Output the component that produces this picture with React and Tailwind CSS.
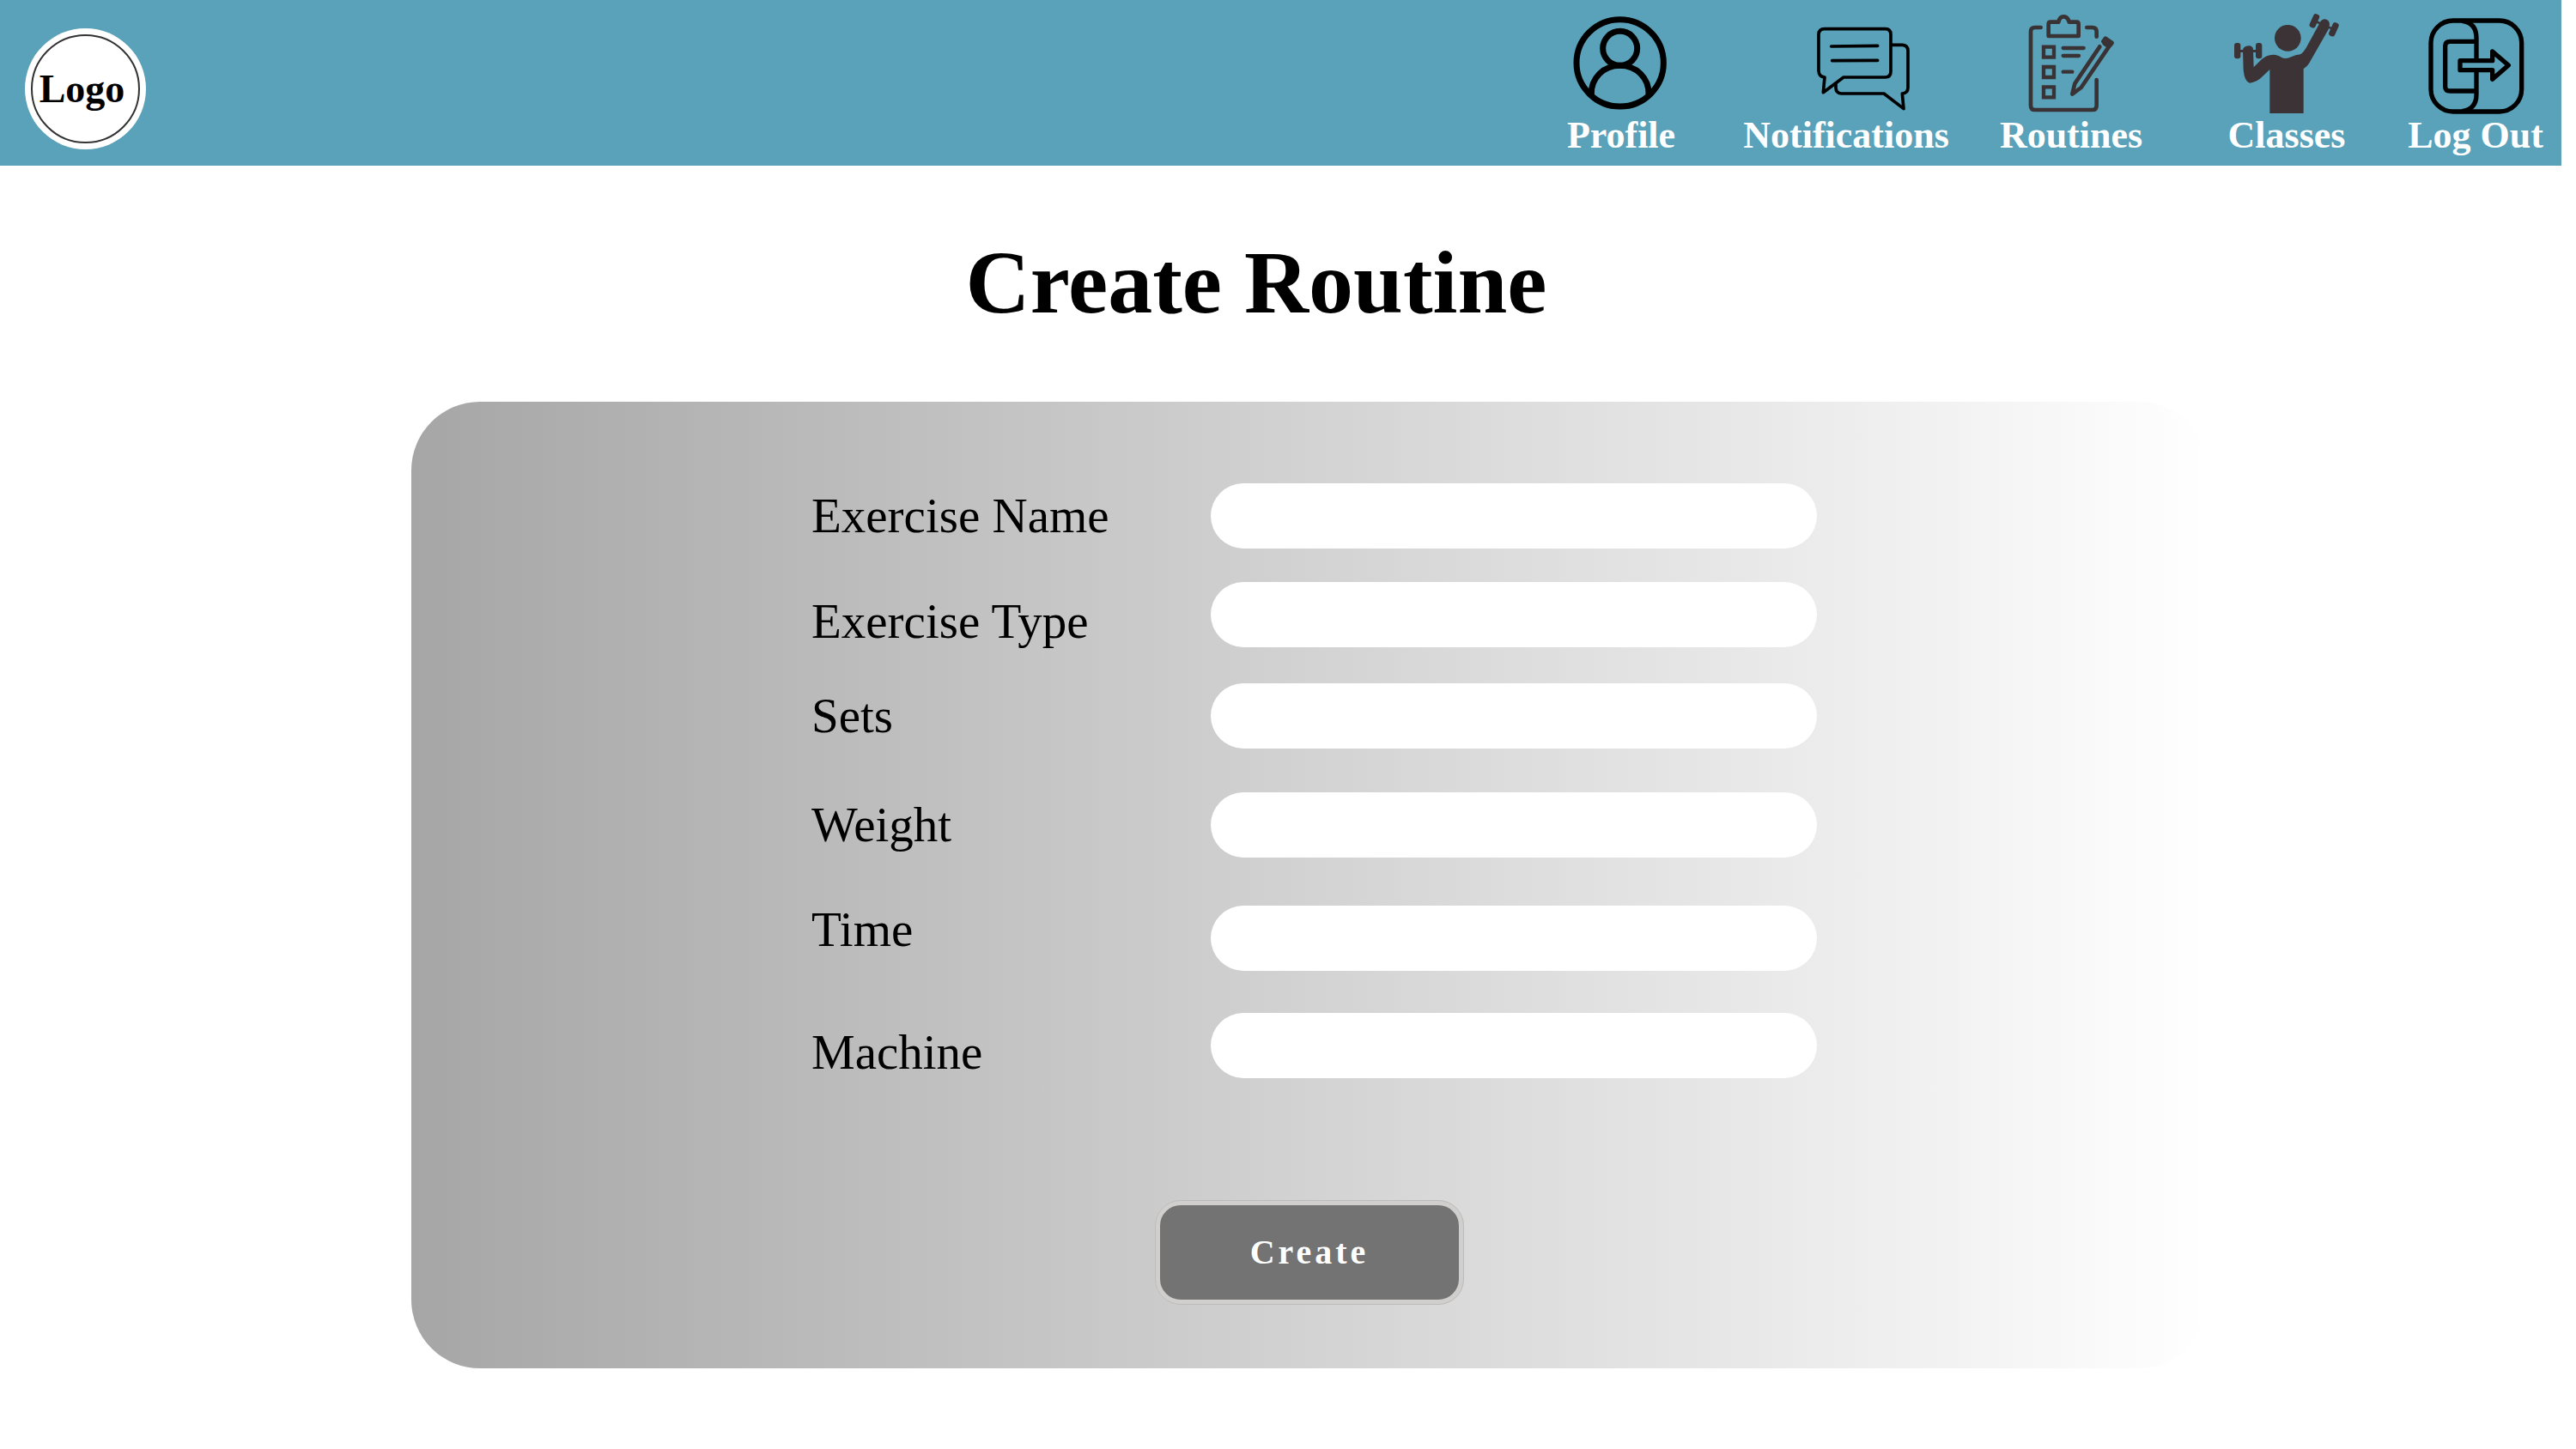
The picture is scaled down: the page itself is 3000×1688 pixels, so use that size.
import React from "react";

function ProfileIcon() {
  return (
    <svg aria-hidden="true" className="h-[134px] w-[160px]" viewBox="24 0 480 402" fill="none" stroke="#000" strokeWidth="21">
      <circle cx="260" cy="220" r="152" />
      <circle cx="260" cy="169" r="60" />
      <path d="M160 330C158 274 202 229 260 229S362 274 360 330" />
    </svg>
  );
}

function NotificationsIcon() {
  return (
    <svg aria-hidden="true" className="h-[134px] w-[160px]" viewBox="810 0 480 402" fill="none" stroke="#000" strokeWidth="11" strokeLinecap="round" strokeLinejoin="round">
      <path d="M975 101H1187Q1206 101 1206 121V250Q1206 270 1187 270H1041L970 323L975 270Q954 268 954 246V121Q954 101 975 101Z" />
      <path d="M1209 157H1247Q1266 158 1266 178V306Q1266 325 1246 327L1251 380L1182 327H1033Q1014 325 1014 306V293" />
      <path d="M998 162L1160 160M1001 212L1160 211" />
    </svg>
  );
}

function RoutinesIcon() {
  return (
    <svg aria-hidden="true" className="h-[134px] w-[160px]" viewBox="96 0 480 402" fill="none" stroke="#3a3335" strokeWidth="14" strokeLinecap="round" strokeLinejoin="round">
      <path d="M230 96H210Q195 96 195 111V368Q195 384 210 384H410Q425 384 425 368V279M391 96H410Q425 96 425 111V128" />
      <path d="M257 126V84Q257 77 264 77H292Q296 58 310 58T329 77H356Q362 77 362 84V126Z" />
      <g strokeWidth="13" strokeLinejoin="miter">
        <path d="M240 164H276V200H240ZM240 234H276V270H240ZM240 304H276V340H240Z" />
        <path d="M308 168H380M308 195H363M308 251H340" />
      </g>
      <path d="M436 163L349 292L340 329L371 306L468 163L452 152" />
      <path d="M456 134L479 150L471 160L448 145Z" />
    </svg>
  );
}

function ClassesIcon() {
  return (
    <svg aria-hidden="true" className="h-[134px] w-[160px]" viewBox="69 0 480 402" fill="#3b3335">
      <circle cx="313" cy="133" r="46" />
      <path d="M250 396V243L228 264Q205 288 180 290Q162 285 158 245L156 175Q157 161 177 160Q191 161 192 172L194 235L222 207Q238 192 262 191Q280 192 290 200Q306 209 325 199Q340 192 357 190Q368 184 380 162L423 83Q430 67 443 67Q459 70 459 86L455 103L387 222Q380 233 368 241V396Z" />
      <rect x="126" y="150" width="22" height="55" rx="9" />
      <rect x="201" y="150" width="22" height="55" rx="9" />
      <rect x="146" y="174" width="57" height="9" />
      <g transform="rotate(24 440 88)">
        <rect x="392" y="63" width="22" height="50" rx="9" />
        <rect x="466" y="63" width="22" height="50" rx="9" />
        <rect x="412" y="84" width="56" height="8" />
      </g>
    </svg>
  );
}

function LogOutIcon() {
  return (
    <svg aria-hidden="true" className="h-[134px] w-[160px]" viewBox="729 0 480 402" fill="none" stroke="#000" strokeWidth="16" strokeLinejoin="round">
      <rect x="813" y="72" width="317" height="318" rx="78" />
      <path d="M922 73Q972 80 972 132V212M972 245V330Q972 382 922 389" />
      <path d="M972 145H880Q863 145 863 161V302Q863 318 880 318H972" />
      <path d="M915 212H1028V180L1084 228L1028 277V245H915Z" />
    </svg>
  );
}

const navItems = [
  { label: "Profile", Icon: ProfileIcon },
  { label: "Notifications", Icon: NotificationsIcon },
  { label: "Routines", Icon: RoutinesIcon },
  { label: "Classes", Icon: ClassesIcon },
  { label: "Log Out", Icon: LogOutIcon },
];

const fields = [
  { id: "exercise-name", label: "Exercise Name", row: "items-start" },
  { id: "exercise-type", label: "Exercise Type", row: "mt-[39px] h-[84px]", labelSide: "self-end" },
  { id: "sets", label: "Sets", row: "mt-[34px] items-start" },
  { id: "weight", label: "Weight", row: "mt-[51px] items-start" },
  { id: "time", label: "Time", row: "mt-[46px] h-[86px]", inputSide: "self-end" },
  { id: "machine", label: "Machine", row: "mt-[49px] h-[84px]", labelSide: "self-end" },
];

export default function App() {
  return (
    <div className="min-h-screen bg-white pb-[94px] font-['Liberation_Serif',serif] text-black">
      <header className="mr-[17px] flex items-start justify-between bg-[#59a2ba] pb-[11px]">
        <a href="#home" className="mt-[33px] ml-[29px] flex size-[141px] items-center justify-center rounded-full bg-white">
          <span className="flex size-[127px] items-center justify-center rounded-full border-2 border-[#333] pr-2 text-[46px] leading-[48px] font-bold">
            Logo
          </span>
        </a>
        <nav className="grid grid-cols-[262px_262px_262px_240px_200px]">
          {navItems.map(({ label, Icon }) => (
            <a key={label} href={"#" + label.toLowerCase().replace(" ", "-")} className="flex flex-col items-center text-[44px] leading-[48px] font-bold text-white">
              <Icon />
              {label}
            </a>
          ))}
        </nav>
      </header>

      <main>
        <h1 className="mt-[76px] pr-[74px] text-center text-[104px] leading-[120px] font-bold">Create Routine</h1>

        <form
          onSubmit={(e) => e.preventDefault()}
          className="mt-[79px] mr-[429px] ml-[479px] rounded-[80px] bg-linear-to-r/srgb from-[#a6a6a6] to-white pt-[95px] pb-[74px]"
        >
          <div className="pl-[466px]">
            {fields.map(({ id, label, row, labelSide = "self-start", inputSide = "self-start" }) => (
              <div key={id} className={"flex " + row}>
                <label htmlFor={id} className={"w-[465px] text-[57px] leading-[76px] " + labelSide}>
                  {label}
                </label>
                <input id={id} type="text" className={"h-[76px] w-[706px] rounded-full bg-white px-9 text-[40px] outline-none " + inputSide} />
              </div>
            ))}
          </div>

          <div className="mt-[134px] flex justify-center">
            <button
              type="submit"
              className="h-[122px] w-[360px] rounded-[30px] border-[6px] border-[#d0cfce] bg-[#737373] text-[40px] leading-[48px] font-bold tracking-widest text-white outline-1 -outline-offset-1 outline-[#bcbcbc]"
            >
              Create
            </button>
          </div>
        </form>
      </main>
    </div>
  );
}
